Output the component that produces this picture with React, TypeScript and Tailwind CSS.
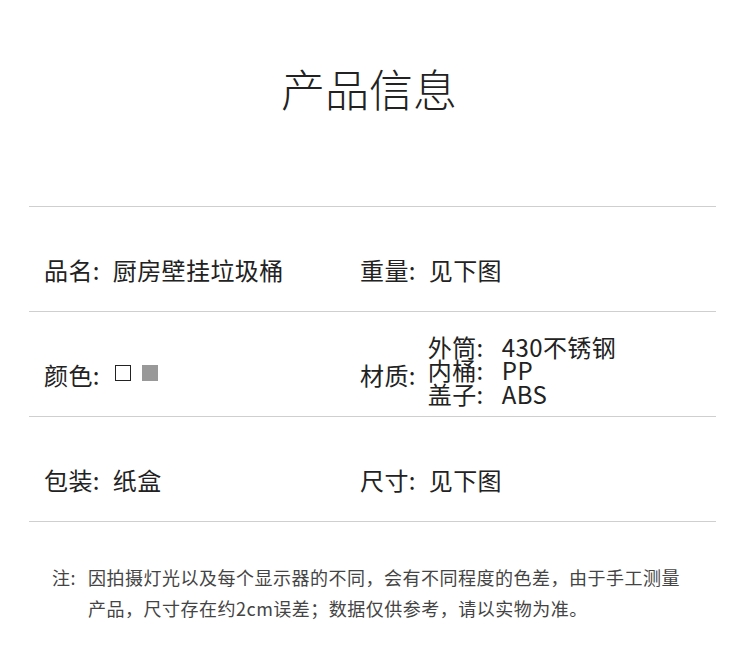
import React from "react";

const font = {
  fontFamily: '"Noto Sans CJK SC", "Noto Sans", sans-serif',
};

function Label({ children }: { children: React.ReactNode }) {
  return (
    <span className="inline-flex items-center">
      {children}
      <span className="inline-block w-[20px]">:</span>
    </span>
  );
}

export default function App() {
  return (
    <div
      className="w-[750px] h-[647px] bg-white text-[#222] overflow-hidden"
      style={font}
    >
      {/* Title */}
      <div className="h-[206px] flex justify-center pt-[66px] pr-[12px]">
        <h1 className="text-[44px] font-light leading-none text-[#222] h-fit">
          产品信息
        </h1>
      </div>

      {/* Table */}
      <div className="ml-[29px] w-[687px] border-t border-[#cfcfcf]">
        <div className="h-[105px] border-b border-[#cfcfcf] flex items-center text-[24px] tracking-[0.4px] leading-none pt-[22px]">
          <div className="w-[331px] pl-[15px] flex items-center">
            <Label>品名</Label>
            <span>厨房壁挂垃圾桶</span>
          </div>
          <div className="flex items-center">
            <Label>重量</Label>
            <span>见下图</span>
          </div>
        </div>

        <div className="h-[105px] border-b border-[#cfcfcf] flex items-center text-[24px] tracking-[0.4px] leading-none pt-[22px]">
          <div className="w-[331px] pl-[15px] flex items-center">
            <Label>颜色</Label>
            <span className="w-[16px] h-[16px] border border-[#222] bg-white ml-[2px] mt-[-4px]" />
            <span className="w-[16px] h-[16px] bg-[#999] ml-[11px] mt-[-4px]" />
          </div>
          <div className="flex items-center">
            <Label>材质</Label>
            <div className="flex flex-col leading-[23.5px] -ml-[1px] -mt-[10px]">
              <div className="flex">
                <span className="w-[74px]">外筒:</span>
                <span>430不锈钢</span>
              </div>
              <div className="flex">
                <span className="w-[74px]">内桶:</span>
                <span>PP</span>
              </div>
              <div className="flex">
                <span className="w-[74px]">盖子:</span>
                <span>ABS</span>
              </div>
            </div>
          </div>
        </div>

        <div className="h-[105px] border-b border-[#cfcfcf] flex items-center text-[24px] tracking-[0.4px] leading-none pt-[22px]">
          <div className="w-[331px] pl-[15px] flex items-center">
            <Label>包装</Label>
            <span>纸盒</span>
          </div>
          <div className="flex items-center">
            <Label>尺寸</Label>
            <span>见下图</span>
          </div>
        </div>
      </div>

      {/* Note */}
      <div className="flex pl-[52px] pt-[40px] text-[18px] tracking-[0.5px] leading-[31px] text-[#444]">
        <span className="w-[36px] shrink-0">注:</span>
        <p className="whitespace-nowrap">
          因拍摄灯光以及每个显示器的不同，会有不同程度的色差，由于手工测量
          <br />
          产品，尺寸存在约2cm误差；数据仅供参考，请以实物为准。
        </p>
      </div>
    </div>
  );
}
